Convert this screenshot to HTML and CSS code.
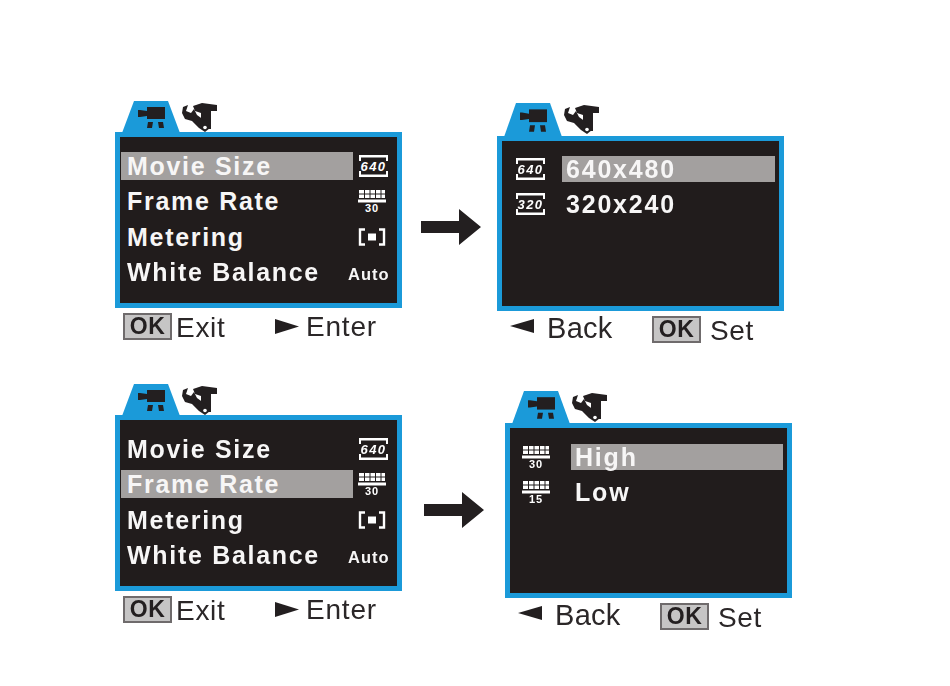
FILE: index.html
```html
<!DOCTYPE html>
<html lang="en">
<head>
<meta charset="utf-8">
<title>Movie settings</title>
<link rel="stylesheet" href="styles.css">
</head>
<body>
<svg class="defs" width="0" height="0" aria-hidden="true">
  <defs>
    <symbol id="tab" viewBox="0 0 58 32" preserveAspectRatio="none">
      <path d="M0 32 L12 0 H46 L58 32 Z" fill="#1b9ad9"/>
      <path d="M16 9 H18 L25 10 V15 L18 16 H16 Z" fill="#231f20"/>
      <rect x="25" y="6" width="18" height="12" fill="#231f20"/>
      <path d="M26 21 H31 L30 27 H25 Z M36 21 H41 L42 27 H37 Z" fill="#231f20"/>
    </symbol>
    <symbol id="tools" viewBox="0 0 36 31">
      <path d="M11 5 L20 2 L35 4 L35 10 L29 10 L29 28 L19 28 L19 12 L13 10 Z" fill="#231f20"/>
      <path d="M6 4 L4 10 L9 12 L12 8 L15 14 L26 22 L28 27 L23 31 L17 27 L10 20 L3 18 L0 12 L1 6 Z" fill="#231f20"/>
      <circle cx="23" cy="26.500" r="1.800" fill="#fff"/>
    </symbol>
    <symbol id="size" viewBox="0 0 29 22">
      <path d="M0 1.200 H29 M0 20.800 H29" stroke="#fff" stroke-width="2.400"/>
      <path d="M1 1 V6 M28 1 V6 M1 16 V21 M28 16 V21" stroke="#fff" stroke-width="2"/>
    </symbol>
    <symbol id="fps" viewBox="0 0 28 22">
      <path d="M1 0 H27 V8 H1 Z" fill="#fff"/>
      <path d="M0 9.500 H28 V12.500 H0 Z" fill="#fff"/>
      <path d="M6.500 0 V8 M12 0 V8 M17.500 0 V8 M23 0 V8" stroke="#211c1c" stroke-width="1"/>
      <path d="M1 4 H27" stroke="#211c1c" stroke-width="1"/>
    </symbol>
  </defs>
</svg>

<main class="page">
  <section class="row row-one">
    <figure class="panel">
      <div class="tabs">
        <svg class="tab"><use href="#tab"/></svg>
        <svg class="tools"><use href="#tools"/></svg>
      </div>
      <div class="screen screen-menu">
        <div class="menu-row"><span class="label active">Movie Size</span>
          <svg class="ico ico-size" viewBox="0 0 29 22"><use href="#size" width="29" height="22"/><text x="14.500" y="15.500" class="size-text">640</text></svg></div>
        <div class="menu-row"><span class="label">Frame Rate</span>
          <svg class="ico ico-fps" viewBox="0 0 28 22"><use href="#fps" width="28" height="22"/><text x="14" y="21.500" class="fps-text">30</text></svg></div>
        <div class="menu-row"><span class="label">Metering</span>
          <svg class="ico ico-meter" viewBox="0 0 28 18"><path d="M7 1.500 H2 V16.500 H7 M21 1.500 H26 V16.500 H21" fill="none" stroke="#fff" stroke-width="2.400"/><rect x="10" y="5.500" width="8" height="7" fill="#fff"/></svg></div>
        <div class="menu-row"><span class="label">White Balance</span><span class="auto">Auto</span></div>
      </div>
      <div class="legend">
        <span class="ok">OK</span><span class="cap cap-exit">Exit</span>
        <svg class="arrow-small arrow-enter" viewBox="0 0 24 15"><path d="M0 0 L24 7.500 L0 15 Z"/></svg><span class="cap cap-enter">Enter</span>
      </div>
    </figure>
    <svg class="next next-one" viewBox="0 0 60 36"><path d="M0 12 H38 V0 L60 18 L38 36 V24 H0 Z"/></svg>
    <figure class="panel panel-right-one">
      <div class="tabs tabs-tall">
        <svg class="tab"><use href="#tab"/></svg>
        <svg class="tools"><use href="#tools"/></svg>
      </div>
      <div class="screen screen-sub">
        <div class="sub-row"><svg class="sub-ico" viewBox="0 0 29 22"><use href="#size" width="29" height="22"/><text x="14.500" y="15.500" class="size-text">640</text></svg><span class="label sub-label active">640x480</span></div>
        <div class="sub-row"><svg class="sub-ico" viewBox="0 0 29 22"><use href="#size" width="29" height="22"/><text x="14.500" y="15.500" class="size-text">320</text></svg><span class="label sub-label">320x240</span></div>
      </div>
      <div class="legend legend-back">
        <svg class="arrow-small arrow-back" viewBox="0 0 24 14"><path d="M24 0 L0 7 L24 14 Z"/></svg><span class="cap cap-back">Back</span>
        <span class="ok ok-set">OK</span><span class="cap cap-set">Set</span>
      </div>
    </figure>
  </section>

  <section class="row row-two">
    <figure class="panel">
      <div class="tabs">
        <svg class="tab"><use href="#tab"/></svg>
        <svg class="tools"><use href="#tools"/></svg>
      </div>
      <div class="screen screen-menu">
        <div class="menu-row"><span class="label">Movie Size</span>
          <svg class="ico ico-size" viewBox="0 0 29 22"><use href="#size" width="29" height="22"/><text x="14.500" y="15.500" class="size-text">640</text></svg></div>
        <div class="menu-row"><span class="label active">Frame Rate</span>
          <svg class="ico ico-fps" viewBox="0 0 28 22"><use href="#fps" width="28" height="22"/><text x="14" y="21.500" class="fps-text">30</text></svg></div>
        <div class="menu-row"><span class="label">Metering</span>
          <svg class="ico ico-meter" viewBox="0 0 28 18"><path d="M7 1.500 H2 V16.500 H7 M21 1.500 H26 V16.500 H21" fill="none" stroke="#fff" stroke-width="2.400"/><rect x="10" y="5.500" width="8" height="7" fill="#fff"/></svg></div>
        <div class="menu-row"><span class="label">White Balance</span><span class="auto">Auto</span></div>
      </div>
      <div class="legend">
        <span class="ok">OK</span><span class="cap cap-exit">Exit</span>
        <svg class="arrow-small arrow-enter" viewBox="0 0 24 15"><path d="M0 0 L24 7.500 L0 15 Z"/></svg><span class="cap cap-enter">Enter</span>
      </div>
    </figure>
    <svg class="next next-two" viewBox="0 0 60 36"><path d="M0 12 H38 V0 L60 18 L38 36 V24 H0 Z"/></svg>
    <figure class="panel panel-right-two">
      <div class="tabs tabs-mid">
        <svg class="tab"><use href="#tab"/></svg>
        <svg class="tools"><use href="#tools"/></svg>
      </div>
      <div class="screen screen-sub screen-sub-two">
        <div class="sub-row"><svg class="sub-ico sub-ico-fps" viewBox="0 0 28 22"><use href="#fps" width="28" height="22"/><text x="14" y="21.500" class="fps-text">30</text></svg><span class="label sub-label sub-label-two active">High</span></div>
        <div class="sub-row"><svg class="sub-ico sub-ico-fps" viewBox="0 0 28 22"><use href="#fps" width="28" height="22"/><text x="14" y="21.500" class="fps-text">15</text></svg><span class="label sub-label sub-label-two">Low</span></div>
      </div>
      <div class="legend legend-back">
        <svg class="arrow-small arrow-back" viewBox="0 0 24 14"><path d="M24 0 L0 7 L24 14 Z"/></svg><span class="cap cap-back">Back</span>
        <span class="ok ok-set">OK</span><span class="cap cap-set">Set</span>
      </div>
    </figure>
  </section>
</main>
</body>
</html>
```

FILE: styles.css
```css
* { box-sizing: border-box; }
html, body { margin: 0; padding: 0; background: #fff; }
body { width: 950px; height: 686px; overflow: hidden; font-family: "Liberation Sans", Arial, sans-serif; color: #2b2728; }
.defs { position: absolute; }
.page { filter: blur(0.5px); padding: 101px 0 0 115px; }
.row { display: flex; align-items: flex-start; height: 283px; }
.panel { margin: 0; width: 287px; flex: none; }
.panel-right-one { margin: 2px 0 0 16px; }
.panel-right-two { margin: 7px 0 0 21px; }
.next { width: 60px; height: 36px; flex: none; fill: #231f20; }
.next-one { margin: 108px 0 0 19px; }
.next-two { margin: 108px 0 0 22px; }

.tabs { display: flex; align-items: flex-start; height: 31px; padding-left: 7px; }
.tabs-mid { height: 32px; }
.tabs-tall { height: 33px; }
.tab { width: 58px; height: calc(100% + 1px); flex: none; }
.tools { width: 36px; height: 31px; flex: none; margin: 0 0 0 2px; }

.screen { height: 176px; background: #211c1c; border: 5px solid #1b9ad9; }
.screen-menu { padding: 11px 0 0 1px; }
.screen-sub { height: 175px; padding-top: 10px; }
.screen-sub-two { padding-top: 11px; }

.menu-row { display: flex; align-items: center; height: 35.5px; }
.sub-row { display: flex; align-items: center; height: 35.5px; }
.label { display: block; width: 232px; height: 28px; line-height: 29px; padding-left: 6px; flex: none; font-size: 25px; font-weight: 700; letter-spacing: 1.7px; color: #f7f6f6; white-space: nowrap; }
.active { background: #a3a09f; }
.ico { flex: none; }
.ico-size { width: 29px; height: 22px; margin-left: 6px; }
.ico-fps { width: 28px; height: 22px; margin-left: 5px; }
.ico-meter { width: 28px; height: 18px; margin-left: 5px; }
.auto { margin-left: -5px; font-size: 16.5px; font-weight: 700; letter-spacing: 1px; color: #f7f6f6; padding-top: 4px; }
.size-text { font: italic 700 13px "Liberation Sans", Arial, sans-serif; letter-spacing: 1.4px; fill: #fff; text-anchor: middle; }
.fps-text { font: 700 11px "Liberation Sans", Arial, sans-serif; letter-spacing: 1px; fill: #fff; text-anchor: middle; }

.sub-ico { width: 29px; height: 22px; margin-left: 14px; flex: none; }
.sub-ico-fps { width: 28px; margin-left: 12px; }
.sub-label { width: 213px; height: 26px; line-height: 27px; padding-left: 4px; margin-left: 17px; letter-spacing: 1.8px; }
.sub-label-two { width: 212px; margin-left: 21px; }

.legend { display: flex; align-items: center; height: 27px; margin-top: 5px; padding-left: 8px; }
.legend-back { padding-left: 13px; }
.ok { width: 49px; height: 27px; line-height: 23px; flex: none; text-align: center; font-size: 23px; font-weight: 700; letter-spacing: 0.5px; background: #c6c5c5; border: 2px solid #6f6b6c; color: #231f20; }
.cap { font-size: 28px; line-height: 28px; white-space: nowrap; }
.cap-exit { margin-left: 4px; letter-spacing: 0.7px; width: 49px; padding-top: 3px; }
.arrow-small { flex: none; fill: #231f20; }
.arrow-enter { width: 24px; height: 15px; margin-left: 50px; }
.cap-enter { margin-left: 7px; letter-spacing: 0.8px; padding-top: 1px; }
.arrow-back { width: 24px; height: 14px; margin-top: -7px; }
.cap-back { margin-left: 13px; width: 105px; flex: none; letter-spacing: 0.3px; font-size: 29px; margin-top: -3px; }
.ok-set { margin-top: 0; }
.cap-set { margin-left: 9px; letter-spacing: 0.6px; padding-top: 3px; }
```
